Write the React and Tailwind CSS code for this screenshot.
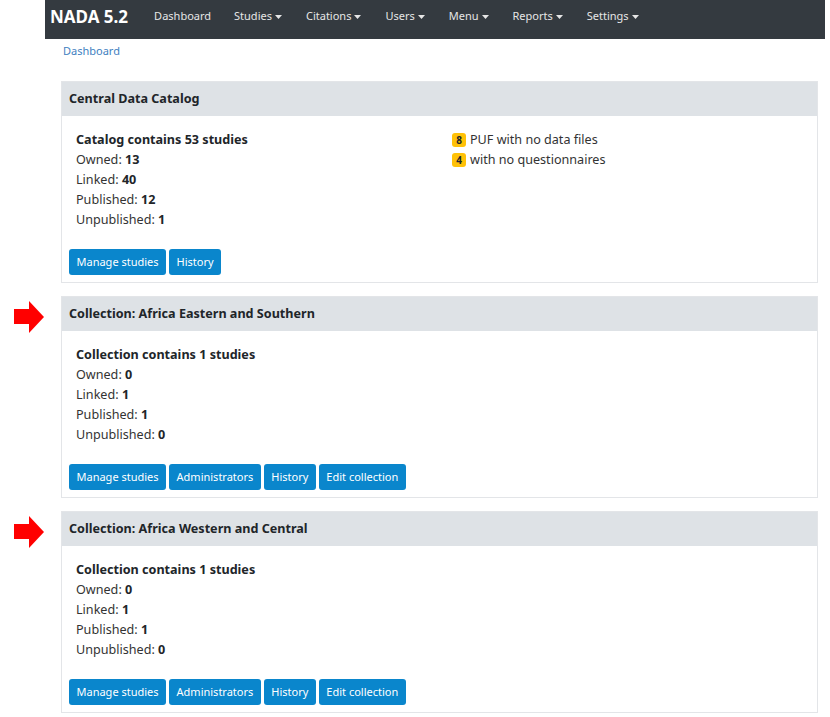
import React from "react";

const nav = ["Studies", "Citations", "Users", "Menu", "Reports", "Settings"];

function Caret() {
  return (
    <svg width="7" height="4" viewBox="0 0 7 4" className="ml-[3px] inline-block">
      <path d="M0 0 L7 0 L3.5 4 Z" fill="currentColor" />
    </svg>
  );
}

function Arrow() {
  return (
    <svg width="32" height="33" viewBox="0 0 32 33" className="absolute left-[-48px] top-[4px]">
      <path d="M0 8 H15 V0 L30 16 L15 32 V23 H0 Z" fill="#ff0000" />
    </svg>
  );
}

function Stat({ label, value }) {
  return (
    <div className="h-[20px] leading-[20px] text-[#333]">
      {label}: <b className="text-[#212529]">{value}</b>
    </div>
  );
}

function Btn({ children }) {
  return (
    <button className="h-[26px] px-[7.5px] rounded-[3px] bg-[#0a86cc] text-white text-[11px] leading-[26px]">
      {children}
    </button>
  );
}

function Card({ title, arrow, kind, counts, buttons, extra }) {
  return (
    <div className="relative border border-[#e3e5e8] bg-white">
      {arrow && <Arrow />}
      <div className="h-[34px] bg-[#dee2e6] px-[7px] flex items-center font-bold text-[12.6px] text-[#212529]">
        {title}
      </div>
      <div className="px-[7px] pt-[14px] pb-[7px]">
        <div className="grid grid-cols-[376px_1fr] pl-[7px]">
          <div>
            <div className="h-[20px] leading-[20px] font-bold text-[#212529]">
              {kind} contains {counts[0]} studies
            </div>
            <Stat label="Owned" value={counts[1]} />
            <Stat label="Linked" value={counts[2]} />
            <Stat label="Published" value={counts[3]} />
            <Stat label="Unpublished" value={counts[4]} />
          </div>
          <div>{extra}</div>
        </div>
        <div className="flex gap-[3px] mt-[19px]">
          {buttons.map((b) => (
            <Btn key={b}>{b}</Btn>
          ))}
        </div>
      </div>
    </div>
  );
}

function Badge({ n, text }) {
  return (
    <div className="h-[20px] flex items-center gap-[4px] text-[#333]">
      <span className="w-[14px] h-[14px] rounded-[3px] bg-[#ffc107] text-[10px] font-bold text-[#212529] flex items-center justify-center">
        {n}
      </span>
      {text}
    </div>
  );
}

export default function App() {
  return (
    <div
      className="bg-white min-h-[717px] pl-[45px] pr-[5px] text-[12.6px]"
      style={{ fontFamily: '"Noto Sans", "Open Sans", sans-serif' }}
    >
      <div className="h-[39px] bg-[#343a40] flex items-center pl-[5px] pb-[6px]">
        <span className="text-white font-bold text-[17px] mr-[26px]">NADA 5.2</span>
        <span className="text-[#e6e6e6] text-[11px] mr-[23px]">Dashboard</span>
        {nav.map((n) => (
          <span key={n} className="text-[#e6e6e6] text-[11px] mr-[24px] flex items-center">
            {n}
            <Caret />
          </span>
        ))}
      </div>
      <div className="ml-[16px] mr-[7px]">
        <div className="h-[42px] pt-[4px] pl-[2px] text-[11px] text-[#3f7fbf]">Dashboard</div>
        <div className="flex flex-col gap-[13px]">
          <Card
            title="Central Data Catalog"
            kind="Catalog"
            counts={[53, 13, 40, 12, 1]}
            buttons={["Manage studies", "History"]}
            extra={
              <>
                <Badge n="8" text="PUF with no data files" />
                <Badge n="4" text="with no questionnaires" />
              </>
            }
          />
          <Card
            arrow
            title="Collection: Africa Eastern and Southern"
            kind="Collection"
            counts={[1, 0, 1, 1, 0]}
            buttons={["Manage studies", "Administrators", "History", "Edit collection"]}
          />
          <Card
            arrow
            title="Collection: Africa Western and Central"
            kind="Collection"
            counts={[1, 0, 1, 1, 0]}
            buttons={["Manage studies", "Administrators", "History", "Edit collection"]}
          />
        </div>
      </div>
    </div>
  );
}
